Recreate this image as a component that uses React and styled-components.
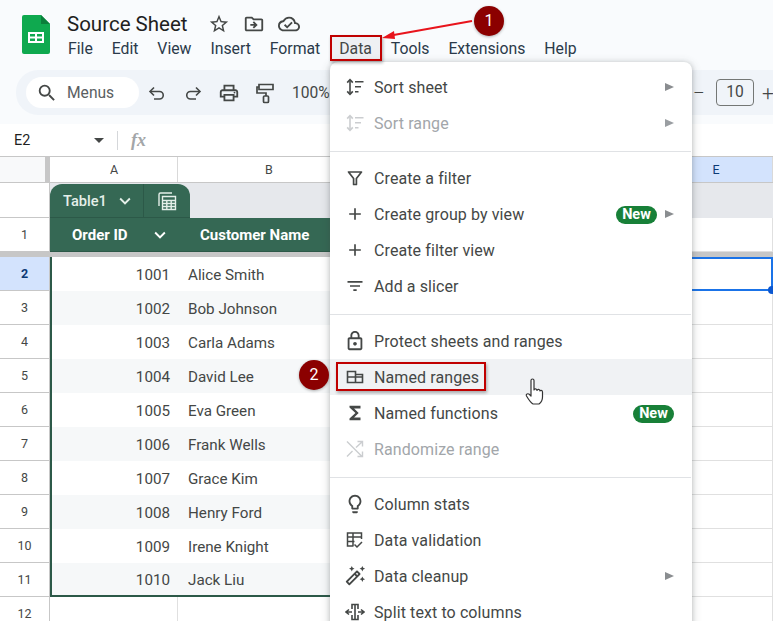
import styled, { createGlobalStyle } from "styled-components";
import {
  MdStarBorder,
  MdOutlineDriveFileMove,
  MdOutlineCloudDone,
  MdSearch,
  MdOutlinePrint,
  MdKeyboardArrowDown,
  MdOutlineLock,
  MdAdd,
  MdFilterList,
  MdOutlineLightbulb,
  MdOutlineAutoFixHigh,
  MdFunctions,
} from "react-icons/md";

const COLUMNS = "50px 128px 182px 150px 150px 113px";

const GlobalStyle = createGlobalStyle`
  html, body {
    margin: 0;
    padding: 0;
    background: #fff;
    font-family: Roboto, "Liberation Sans", sans-serif;
  }
`;

const Page = styled.div`
  position: relative;
  width: 773px;
  height: 621px;
  overflow: hidden;
  background: #fff;
  color: #444746;
`;

const Top = styled.div`
  background: #f9fbfd;
  height: 124px;
`;

const TitleBar = styled.div`
  display: flex;
  height: 70px;
`;

const LogoSlot = styled.div`
  width: 45px;
  padding: 15px 0 0 22px;
`;

const TitleColumn = styled.div`
  display: flex;
  flex-direction: column;
`;

const TitleRow = styled.div`
  display: flex;
  align-items: center;
  height: 31px;
  margin-top: 8px;
  color: #444746;
`;

const Title = styled.div`
  font-size: 20.5px;
  color: #1f1f1f;
  width: 141px;
`;

const TitleIcons = styled.div`
  display: flex;
  align-items: center;
  gap: 13px;
  font-size: 22px;
  svg { display: block; }
`;

const MenuBar = styled.div`
  display: flex;
  gap: 18.9px;
  margin-left: 1px;
  font-size: 15.8px;
  line-height: 19px;
`;

const MenuName = styled.span`
  color: #2b3a4a;
`;

const ActiveMenuName = styled.span`
  color: #444746;
  background: #eef0f3;
  padding: 3px 8px;
  margin: -3px -8px;
`;

const Toolbar = styled.div`
  display: flex;
  align-items: center;
  height: 45px;
  margin-left: 16px;
  padding-left: 10px;
  background: #f0f4f9;
  border-radius: 22px 0 0 22px;
`;

const SearchPill = styled.div`
  display: flex;
  align-items: center;
  width: 113px;
  height: 31px;
  box-sizing: border-box;
  padding-left: 10px;
  gap: 9px;
  background: #fff;
  border-radius: 16px;
  font-size: 15.6px;
  color: #5a5e62;
  svg { font-size: 22px; color: #444746; }
`;

const ToolButton = styled.div`
  display: flex;
  justify-content: center;
  width: 36px;
  font-size: 22px;
  color: #444746;
`;

const Zoom = styled.span`
  margin-left: 9px;
  font-size: 15.6px;
  color: #444746;
`;

const FontSize = styled.div`
  display: flex;
  align-items: center;
  margin-left: auto;
  margin-right: -1px;
  font-size: 15.6px;
`;

const SizeMark = styled.span`
  font-size: 21px;
  font-weight: 300;
  width: 12px;
  text-align: center;
`;

const SizeBox = styled.div`
  width: 38px;
  height: 27px;
  margin: 0 8px 0 11px;
  box-sizing: border-box;
  border: 1px solid #747775;
  border-radius: 4px;
  text-align: center;
  line-height: 25px;
`;

const FormulaBar = styled.div`
  display: flex;
  align-items: center;
  height: 33px;
  box-sizing: border-box;
  padding-left: 14px;
  border-bottom: 1px solid #c7c7c7;
  background: #fff;
`;

const CellName = styled.div`
  width: 80px;
  font-size: 14.4px;
  color: #1f1f1f;
`;

const DropTriangle = styled.div`
  width: 0;
  height: 0;
  border-left: 5px solid transparent;
  border-right: 5px solid transparent;
  border-top: 5px solid #444746;
`;

const BarDivider = styled.div`
  width: 1px;
  height: 19px;
  margin: 0 13px;
  background: #d5d7da;
`;

const Fx = styled.div`
  font-family: "Liberation Serif", serif;
  font-style: italic;
  font-weight: 700;
  font-size: 18px;
  color: #a3a6a9;
`;

const HeaderRow = styled.div`
  display: grid;
  grid-template-columns: ${COLUMNS};
  height: 26px;
  box-sizing: border-box;
  border-bottom: 1px solid #c7c7c7;
`;

const Corner = styled.div`
  background: #f8f9fa;
  border-right: 5px solid #c7c7c7;
`;

const ColHead = styled.div`
  display: flex;
  align-items: center;
  justify-content: center;
  padding-left: ${(p) => (p.$selected ? 0 : 1)}px;
  font-size: 12.5px;
  color: ${(p) => (p.$selected ? "#0b3a75" : "#444746")};
  background: ${(p) => (p.$selected ? "#d3e3fd" : "#fff")};
  border-right: 1px solid #d9d9d9;
`;

const TabRow = styled.div`
  display: grid;
  grid-template-columns: 50px 1fr;
  height: 35px;
`;

const RowHead = styled.div`
  display: flex;
  align-items: center;
  justify-content: center;
  box-sizing: border-box;
  font-size: 12.5px;
  font-weight: ${(p) => (p.$selected ? 700 : 400)};
  color: ${(p) => (p.$selected ? "#0b3a75" : "#444746")};
  background: ${(p) => (p.$selected ? "#d3e3fd" : "#fff")};
  border-right: 1px solid #c7c7c7;
  border-bottom: 1px solid #c7c7c7;
`;

const TabBand = styled.div`
  display: flex;
  align-items: flex-end;
  background: #e6e8ec;
`;

const TableTab = styled.div`
  display: flex;
  align-items: center;
  width: 140px;
  height: 34px;
  background: #356854;
  color: #e4efe9;
  border-radius: 12px 12px 0 0;
  border-bottom: 1px solid #2c5948;
  box-sizing: border-box;
  font-size: 14.6px;
  font-weight: 500;
`;

const TabName = styled.div`
  display: flex;
  align-items: center;
  gap: 7px;
  width: 94px;
  height: 100%;
  padding-left: 13px;
  box-sizing: border-box;
  border-right: 1px solid #2c5948;
  svg { font-size: 22px; }
`;

const TabIcon = styled.div`
  flex: 1;
  display: flex;
  justify-content: center;
`;

const Row = styled.div`
  display: grid;
  grid-template-columns: ${COLUMNS};
  height: 34px;
`;

const TitleCell = styled.div`
  display: flex;
  align-items: center;
  background: #356854;
  color: #fff;
  font-size: 15px;
  font-weight: 700;
  border-bottom: 1px solid #2c5948;
  svg { font-size: 22px; }
`;

const OrderTitle = styled(TitleCell)`
  padding-left: 22px;
  gap: 21px;
`;

const NameTitle = styled(TitleCell)`
  padding-left: 22px;
`;

const FreezeBand = styled.div`
  height: 5px;
  background: #c7c7c7;
`;

const DataCell = styled.div`
  display: flex;
  align-items: center;
  box-sizing: border-box;
  padding: ${(p) => (p.$number ? "1px 8px 0 0" : "1px 0 0 10px")};
  font-size: 15.2px;
  color: #444746;
  justify-content: ${(p) => (p.$number ? "flex-end" : "flex-start")};
  background: ${(p) => (p.$striped ? "#f6f8f9" : "#fff")};
  border-left: ${(p) => (p.$edge ? "2px solid #2c5948" : "none")};
  border-bottom: ${(p) => (p.$last ? "2px solid #2c5948" : "none")};
`;

const PlainCell = styled.div`
  box-sizing: border-box;
  border-right: 1px solid #e0e0e0;
  border-bottom: 1px solid #e0e0e0;
`;

const SelectedCell = styled.div`
  position: relative;
  box-sizing: border-box;
  border: 2px solid #1a73e8;
  height: 34px;
`;

const FillHandle = styled.div`
  position: absolute;
  right: -5px;
  bottom: -5px;
  width: 8px;
  height: 8px;
  border-radius: 50%;
  background: #0b57d0;
`;

const Menu = styled.div`
  position: absolute;
  left: 330px;
  top: 62px;
  width: 362px;
  height: 580px;
  padding-top: 7px;
  box-sizing: border-box;
  background: #fff;
  border-radius: 8px 8px 0 0;
  box-shadow: 0 1px 5px rgba(60, 64, 67, 0.3), 0 2px 10px 2px rgba(60, 64, 67, 0.12);
`;

const MenuRow = styled.div`
  display: flex;
  align-items: center;
  height: 36px;
  padding: 0 18px 0 14px;
  font-size: 16px;
  letter-spacing: 0.1px;
  color: ${(p) => (p.$disabled ? "#a2a6aa" : "#444746")};
  background: ${(p) => (p.$hover ? "#f0f2f4" : "transparent")};
`;

const MenuIcon = styled.div`
  display: flex;
  align-items: center;
  justify-content: center;
  width: 22px;
  margin-right: 8px;
  font-size: ${(p) => p.$size || 20}px;
  opacity: ${(p) => (p.$disabled ? 0.55 : 1)};
  svg { display: block; }
`;

const MenuLabel = styled.div`
  flex: 1;
`;

const NewBadge = styled.div`
  width: 41px;
  height: 18px;
  margin-top: 2px;
  border-radius: 9px;
  background: #188038;
  color: #fff;
  font-size: 14.5px;
  font-weight: 700;
  letter-spacing: 0;
  line-height: 18px;
  text-align: center;
`;

const SubArrow = styled.div`
  width: 0;
  height: 0;
  margin-left: 8px;
  border-top: 4px solid transparent;
  border-bottom: 4px solid transparent;
  border-left: 9px solid ${(p) => (p.$disabled ? "#9a9ea2" : "#8a8d90")};
`;

const MenuDivider = styled.div`
  height: 1px;
  margin: 10px 1px 8px 0;
  background: #e0e2e5;
`;

const Marker = styled.div`
  position: absolute;
  left: ${(p) => p.$x}px;
  top: ${(p) => p.$y}px;
  width: ${(p) => p.$w}px;
  height: ${(p) => p.$h}px;
  box-sizing: border-box;
  border: 2px solid #c00000;
  box-shadow: 1px 2px 3px rgba(0, 0, 0, 0.3);
`;

const Step = styled.div`
  position: absolute;
  left: ${(p) => p.$x - 15}px;
  top: ${(p) => p.$y - 15}px;
  width: 30px;
  height: 30px;
  border-radius: 50%;
  background: #8b0000;
  color: #fff;
  font-size: 16px;
  line-height: 30px;
  text-align: center;
  box-shadow: 0 1px 3px rgba(0, 0, 0, 0.3);
`;

const Overlay = styled.svg`
  position: absolute;
  left: ${(p) => p.$x}px;
  top: ${(p) => p.$y}px;
`;

function SheetsLogo() {
  return (
    <svg width="28" height="39" viewBox="0 0 28 39">
      <path d="M2 0h17l9 9v28a2 2 0 0 1-2 2H2a2 2 0 0 1-2-2V2a2 2 0 0 1 2-2z" fill="#0fa94f" />
      <path d="M19 0l9 9h-9z" fill="#0b7f3b" />
      <path d="M6 17h16v11H6z M8 19v2.500h5V19z M15 19v2.500h5V19z M8 23.500V26h5v-2.500z M15 23.500V26h5v-2.500z" fill="#fff" fillRule="evenodd" />
    </svg>
  );
}

function UndoIcon({ flip }) {
  return (
    <svg width="20" height="20" viewBox="0 0 20 20" fill="none" stroke="currentColor" strokeWidth="1.6" style={flip ? { transform: "scaleX(-1)" } : undefined}>
      <path d="M3.500 8.500h9a3.700 3.700 0 0 1 0 7.500H7" />
      <path d="M7 4.500L3 8.500l4 4" />
    </svg>
  );
}

function PaintIcon() {
  return (
    <svg width="20" height="22" viewBox="0 0 20 22" fill="none" stroke="currentColor" strokeWidth="1.7">
      <path d="M4 2.500h14v5H4z" />
      <path d="M4 5H2v6h9v3" />
      <rect x="8.500" y="14" width="5" height="6.500" rx="1" />
    </svg>
  );
}

function SortIcon() {
  return (
    <svg width="20" height="20" viewBox="0 0 20 20" fill="none" stroke="currentColor">
      <path d="M5 3v14" strokeWidth="1.6" />
      <path d="M2.200 5.600L5 2.600l2.800 3M2.200 14.400L5 17.400l2.800-3" strokeWidth="1.6" />
      <path d="M10 4.800h8.500M10 9.800h6M10 14.800h3.500" strokeWidth="1.6" />
    </svg>
  );
}

function FilterIcon() {
  return (
    <svg width="18" height="18" viewBox="0 0 18 18" fill="none" stroke="currentColor" strokeWidth="1.7">
      <path d="M2.500 3h13L10.400 9.600V15.500H7.600V9.600z" strokeLinejoin="round" />
    </svg>
  );
}

function RangesIcon() {
  return (
    <svg width="18" height="14" viewBox="0 0 18 14" fill="none" stroke="currentColor" strokeWidth="1.600">
      <path d="M1.500 1.500h8v11h-8zM1.500 7h15v5.500h-7M9.500 4.500h7V7M9.500 7v5.500" />
    </svg>
  );
}

function ShuffleIcon() {
  return (
    <svg width="18" height="18" viewBox="0 0 18 18" fill="none" stroke="currentColor" strokeWidth="1.4">
      <path d="M1 1.500l15 15M16.500 11.500v5h-5" />
      <path d="M1 16.500l5.500-5.500M10 7.500l6.500-6M11.500 1.500h5v5" />
    </svg>
  );
}

function ValidationIcon() {
  return (
    <svg width="18" height="18" viewBox="0 0 18 18" fill="none" stroke="currentColor" strokeWidth="1.5">
      <path d="M15.500 8V2H1.500v13h6M1.500 6h14M1.500 10.500h7M7 2v13M8.500 13.500l2.500 2.500 5-5" />
    </svg>
  );
}

function SplitIcon() {
  return (
    <svg width="20" height="20" viewBox="0 0 20 20" fill="none" stroke="currentColor" strokeWidth="1.6">
      <path d="M7 7V2.500h6V7M7 13v4.500h6V13M10 2.500v15" />
      <path d="M1 10h6M4 7.500L1 10l3 2.500M19 10h-6M16 7.500l3 2.500-3 2.500" />
    </svg>
  );
}

function TableIcon() {
  return (
    <svg width="20" height="20" viewBox="0 0 20 20" fill="none" stroke="#e4efe9" strokeWidth="1.4">
      <path d="M2 15V3.500A1.500 1.500 0 0 1 3.500 2H15" />
      <path d="M5.500 5.500h13v13h-13zM5.500 9.500h13M5.500 12.500h13M5.500 15.500h13M9.800 9.500v9M14.200 9.500v9" />
    </svg>
  );
}

const rows = [
  [1001, "Alice Smith"],
  [1002, "Bob Johnson"],
  [1003, "Carla Adams"],
  [1004, "David Lee"],
  [1005, "Eva Green"],
  [1006, "Frank Wells"],
  [1007, "Grace Kim"],
  [1008, "Henry Ford"],
  [1009, "Irene Knight"],
  [1010, "Jack Liu"],
];

const menuNames = ["File", "Edit", "View", "Insert", "Format", "Data", "Tools", "Extensions", "Help"];

export default function App() {
  return (
    <>
      <GlobalStyle />
      <Page>
        <Top>
          <TitleBar>
            <LogoSlot>
              <SheetsLogo />
            </LogoSlot>
            <TitleColumn>
              <TitleRow>
                <Title>Source Sheet</Title>
                <TitleIcons>
                  <MdStarBorder />
                  <MdOutlineDriveFileMove />
                  <MdOutlineCloudDone />
                </TitleIcons>
              </TitleRow>
              <MenuBar>
                {menuNames.map((name) =>
                  name === "Data" ? (
                    <ActiveMenuName key={name}>{name}</ActiveMenuName>
                  ) : (
                    <MenuName key={name}>{name}</MenuName>
                  )
                )}
              </MenuBar>
            </TitleColumn>
          </TitleBar>
          <Toolbar>
            <SearchPill>
              <MdSearch />
              Menus
            </SearchPill>
            <ToolButton><UndoIcon /></ToolButton>
            <ToolButton><UndoIcon flip /></ToolButton>
            <ToolButton><MdOutlinePrint /></ToolButton>
            <ToolButton><PaintIcon /></ToolButton>
            <Zoom>100%</Zoom>
            <FontSize>
              <SizeMark>−</SizeMark>
              <SizeBox>10</SizeBox>
              <SizeMark>+</SizeMark>
            </FontSize>
          </Toolbar>
        </Top>

        <FormulaBar>
          <CellName>E2</CellName>
          <DropTriangle />
          <BarDivider />
          <Fx>fx</Fx>
        </FormulaBar>

        <HeaderRow>
          <Corner />
          <ColHead>A</ColHead>
          <ColHead>B</ColHead>
          <ColHead />
          <ColHead />
          <ColHead $selected>E</ColHead>
        </HeaderRow>

        <TabRow>
          <RowHead />
          <TabBand>
            <TableTab>
              <TabName>
                Table1
                <MdKeyboardArrowDown />
              </TabName>
              <TabIcon>
                <TableIcon />
              </TabIcon>
            </TableTab>
          </TabBand>
        </TabRow>

        <Row>
          <RowHead>1</RowHead>
          <OrderTitle>
            Order ID
            <MdKeyboardArrowDown />
          </OrderTitle>
          <NameTitle>Customer Name</NameTitle>
          <TitleCell />
          <TitleCell />
          <PlainCell />
        </Row>

        <FreezeBand />

        {rows.map(([id, name], i) => {
          const striped = i % 2 === 1;
          const last = i === rows.length - 1;
          return (
            <Row key={id}>
              <RowHead $selected={i === 0}>{i + 2}</RowHead>
              <DataCell $number $edge $striped={striped} $last={last}>{id}</DataCell>
              <DataCell $striped={striped} $last={last}>{name}</DataCell>
              <DataCell $striped={striped} $last={last} />
              <DataCell $striped={striped} $last={last} />
              {i === 0 ? (
                <SelectedCell>
                  <FillHandle />
                </SelectedCell>
              ) : (
                <PlainCell />
              )}
            </Row>
          );
        })}

        <Row>
          <RowHead>12</RowHead>
          <PlainCell />
          <PlainCell />
          <PlainCell />
          <PlainCell />
          <PlainCell />
        </Row>

        <Menu>
          <MenuRow>
            <MenuIcon><SortIcon /></MenuIcon>
            <MenuLabel>Sort sheet</MenuLabel>
            <SubArrow />
          </MenuRow>
          <MenuRow $disabled>
            <MenuIcon $disabled><SortIcon /></MenuIcon>
            <MenuLabel>Sort range</MenuLabel>
            <SubArrow $disabled />
          </MenuRow>
          <MenuDivider />
          <MenuRow>
            <MenuIcon><FilterIcon /></MenuIcon>
            <MenuLabel>Create a filter</MenuLabel>
          </MenuRow>
          <MenuRow>
            <MenuIcon><MdAdd /></MenuIcon>
            <MenuLabel>Create group by view</MenuLabel>
            <NewBadge>New</NewBadge>
            <SubArrow />
          </MenuRow>
          <MenuRow>
            <MenuIcon><MdAdd /></MenuIcon>
            <MenuLabel>Create filter view</MenuLabel>
          </MenuRow>
          <MenuRow>
            <MenuIcon><MdFilterList /></MenuIcon>
            <MenuLabel>Add a slicer</MenuLabel>
          </MenuRow>
          <MenuDivider />
          <MenuRow>
            <MenuIcon $size={22}><MdOutlineLock /></MenuIcon>
            <MenuLabel>Protect sheets and ranges</MenuLabel>
          </MenuRow>
          <MenuRow $hover>
            <MenuIcon><RangesIcon /></MenuIcon>
            <MenuLabel>Named ranges</MenuLabel>
          </MenuRow>
          <MenuRow>
            <MenuIcon $size={22}><MdFunctions /></MenuIcon>
            <MenuLabel>Named functions</MenuLabel>
            <NewBadge>New</NewBadge>
          </MenuRow>
          <MenuRow $disabled>
            <MenuIcon $disabled><ShuffleIcon /></MenuIcon>
            <MenuLabel>Randomize range</MenuLabel>
          </MenuRow>
          <MenuDivider />
          <MenuRow>
            <MenuIcon $size={22}><MdOutlineLightbulb /></MenuIcon>
            <MenuLabel>Column stats</MenuLabel>
          </MenuRow>
          <MenuRow>
            <MenuIcon><ValidationIcon /></MenuIcon>
            <MenuLabel>Data validation</MenuLabel>
          </MenuRow>
          <MenuRow>
            <MenuIcon $size={22}><MdOutlineAutoFixHigh /></MenuIcon>
            <MenuLabel>Data cleanup</MenuLabel>
            <SubArrow />
          </MenuRow>
          <MenuRow>
            <MenuIcon><SplitIcon /></MenuIcon>
            <MenuLabel>Split text to columns</MenuLabel>
          </MenuRow>
        </Menu>

        <Marker $x={330} $y={35} $w={52} $h={26} />
        <Marker $x={336} $y={362} $w={150} $h={29} />

        <Overlay $x={378} $y={14} width="100" height="30">
          <path d="M94 7L10 22" stroke="#e8141c" strokeWidth="2" />
          <path d="M4 24l12-7 1 8z" fill="#e8141c" />
        </Overlay>
        <Step $x={489} $y={21}>1</Step>
        <Step $x={314} $y={375}>2</Step>

        <Overlay $x={525} $y={378} width="20" height="28" viewBox="0 0 20 28">
          <path
            d="M6 2.500c0-2 3-2 3 0V12c0-1.500 3-1.500 3 0.500 0-1.500 3-1.500 3 0.500 0-1 2.500-1 2.500 1v5c0 3-1.500 5.500-3.500 7H8c-2-1-5-5.500-6.500-8-1-2 1.500-3 3-1.500L6 18z"
            fill="#fff"
            stroke="#333"
            strokeWidth="1.2"
            strokeLinejoin="round"
          />
        </Overlay>
      </Page>
    </>
  );
}
